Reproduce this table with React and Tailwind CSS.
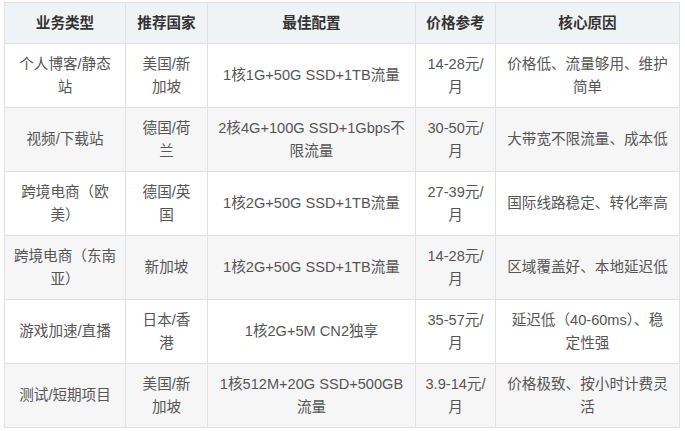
import React from "react";

const rows = [
  [["个人博客/静态", "站"], ["美国/新", "加坡"], ["1核1G+50G SSD+1TB流量"], ["14-28元/", "月"], ["价格低、流量够用、维护", "简单"]],
  [["视频/下载站"], ["德国/荷", "兰"], ["2核4G+100G SSD+1Gbps不", "限流量"], ["30-50元/", "月"], ["大带宽不限流量、成本低"]],
  [["跨境电商（欧", "美）"], ["德国/英", "国"], ["1核2G+50G SSD+1TB流量"], ["27-39元/", "月"], ["国际线路稳定、转化率高"]],
  [["跨境电商（东南", "亚）"], ["新加坡"], ["1核2G+50G SSD+1TB流量"], ["14-28元/", "月"], ["区域覆盖好、本地延迟低"]],
  [["游戏加速/直播"], ["日本/香", "港"], ["1核2G+5M CN2独享"], ["35-57元/", "月"], ["延迟低（40-60ms）、稳", "定性强"]],
  [["测试/短期项目"], ["美国/新", "加坡"], ["1核512M+20G SSD+500GB", "流量"], ["3.9-14元/", "月"], ["价格极致、按小时计费灵", "活"]],
];

const heads = ["业务类型", "推荐国家", "最佳配置", "价格参考", "核心原因"];
const widths = ["w-[121px]", "w-[82px]", "w-[208px]", "w-[80px]", "w-[184px]"];

export default function App() {
  return (
    <div className="w-[685px] h-[431px] bg-white pt-[2px] pl-[4px]" style={{ fontFamily: '"Liberation Sans", "Noto Sans CJK SC", sans-serif' }}>
      <table className="table-fixed border-collapse w-[675px] text-[14.6px] leading-[23px] text-[#555]">
        <colgroup>
          {widths.map((w, i) => (
            <col key={i} className={w} />
          ))}
        </colgroup>
        <thead>
          <tr className="bg-[#f0f3f5]">
            {heads.map((h, i) => (
              <th key={i} className="border border-[#dfe2e5] px-0 py-[8.5px] text-center font-bold text-[#333] whitespace-nowrap">
                {h}
              </th>
            ))}
          </tr>
        </thead>
        <tbody>
          {rows.map((r, ri) => (
            <tr key={ri} className={ri % 2 === 1 ? "bg-[#f6f6f6]" : "bg-white"}>
              {r.map((c, ci) => (
                <td key={ci} className="border border-[#dfe2e5] px-0 py-[8.5px] text-center align-middle whitespace-nowrap">
                  {c.map((line, li) => (
                    <div key={li}>{line}</div>
                  ))}
                </td>
              ))}
            </tr>
          ))}
        </tbody>
      </table>
    </div>
  );
}
